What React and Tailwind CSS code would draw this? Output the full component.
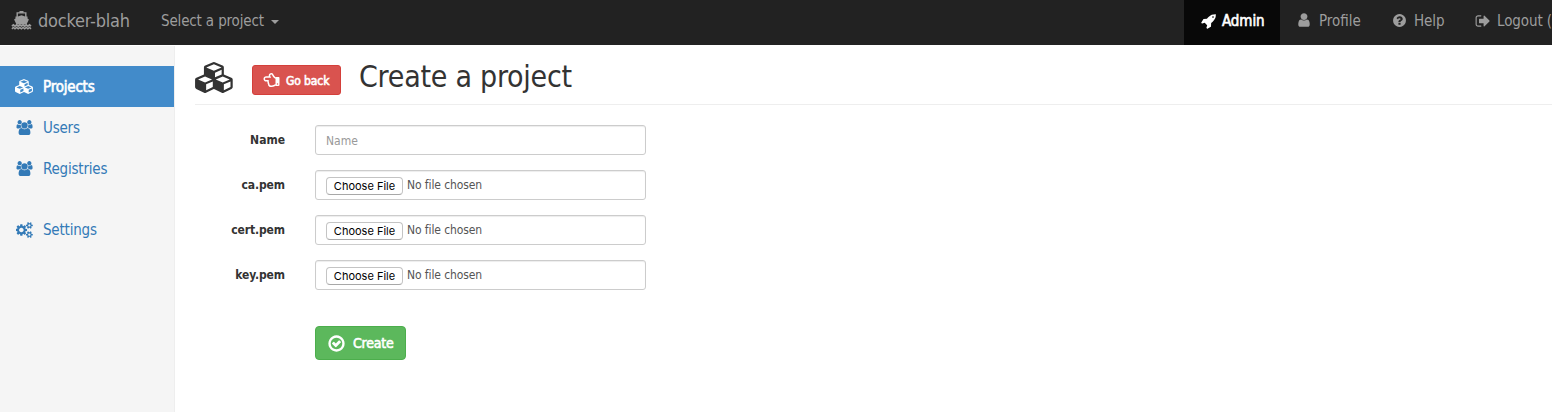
import React from "react";
import { FaRegHandPointLeft } from "react-icons/fa";

const PATHS = {
  cubes:
    "M640 1632l384-192v-314l-384 164v342zm-64-454l404-173-404-173-404 173zm1088 454l384-192v-314l-384 164v342zm-64-454l404-173-404-173-404 173zm-448-293l384-165v-266l-384 164v267zm-64-379l441-189-441-189-441 189zm1088 518v416q0 36-19 67t-52 47l-448 224q-25 14-57 14t-57-14l-448-224q-4-2-7-4-2 2-7 4l-448 224q-25 14-57 14t-57-14l-448-224q-33-16-52-47t-19-67v-416q0-38 21.5-70t56.5-48l434-186v-400q0-38 21.5-70t56.5-48l448-192q23-10 50-10t50 10l448 192q35 16 56.5 48t21.5 70v400l434 186q36 16 57 48t21 70z",
  user: "M1536 1399q0 109-62.5 187t-150.5 78h-854q-88 0-150.5-78t-62.5-187q0-85 8.5-160.5t31.5-152 58.5-131 94-89 134.5-34.5q131 128 313 128t313-128q76 0 134.5 34.5t94 89 58.5 131 31.5 152 8.5 160.5zm-256-887q0 159-112.5 271.5t-271.5 112.5-271.5-112.5-112.5-271.5 112.5-271.5 271.5-112.5 271.5 112.5 112.5 271.5z",
  help: "M1024 1376v-192q0-14-9-23t-23-9h-192q-14 0-23 9t-9 23v192q0 14 9 23t23 9h192q14 0 23-9t9-23zm256-672q0-88-55.5-163t-138.5-116-170-41q-243 0-371 213-15 24 8 42l132 100q7 6 19 6 16 0 25-12 53-68 86-92 34-24 86-24 48 0 85.5 26t37.5 59q0 38-20 61t-68 45q-63 28-115.5 86.5t-52.5 125.5v36q0 14 9 23t23 9h192q14 0 23-9t9-23q0-19 21.5-49.5t54.5-49.5q32-18 49-28.5t46-35 44.5-48 28-60.5 12.5-81zm384 192q0 209-103 385.5t-279.5 279.5-385.5 103-385.5-103-279.5-279.5-103-385.5 103-385.5 279.5-279.5 385.5-103 385.5 103 279.5 279.5 103 385.5z",
  signOut:
    "M704 1440q0 4 1 20t.5 26.5-3 23.5-10 19.5-20.5 6.5h-320q-119 0-203.5-84.5t-84.5-203.5v-704q0-119 84.5-203.5t203.5-84.5h320q13 0 22.5 9.5t9.5 22.5q0 4 1 20t.5 26.5-3 23.5-10 19.5-20.5 6.5h-320q-66 0-113 47t-47 113v704q0 66 47 113t113 47h312l11.5 1 11.5 3 8 5.5 7 9 2 13.5zm928-544q0 26-19 45l-544 544q-19 19-45 19t-45-19-19-45v-288h-448q-26 0-45-19t-19-45v-384q0-26 19-45t45-19h448v-288q0-26 19-45t45-19 45 19l544 544q19 19 19 45z",
  rocket:
    "M1440 448q0-40-28-68t-68-28-68 28-28 68 28 68 68 28 68-28 28-68zm224-288q0 249-75.5 430.5t-253.5 360.5q-81 80-195 176l-20 379q-2 16-16 26l-384 224q-7 4-16 4-12 0-23-9l-64-64q-13-14-8-32l85-276-281-281-276 85q-3 1-9 1-14 0-23-9l-64-64q-17-19-5-39l224-384q10-14 26-16l379-20q96-114 176-195 188-187 358-258t431-71q14 0 24 9.5t10 22.5z",
  check:
    "M1299 813l-422 422q-19 19-45 19t-45-19l-294-294q-19-19-19-45t19-45l102-102q19-19 45-19t45 19l147 147 275-275q19-19 45-19t45 19l102 102q19 19 19 45t-19 45zm141 83q0-148-73-273t-198-198-273-73-273 73-198 198-73 273 73 273 198 198 273 73 273-73 198-198 73-273zm224 0q0 209-103 385.5t-279.5 279.5-385.5 103-385.5-103-279.5-279.5-103-385.5 103-385.5 279.5-279.5 385.5-103 385.5 103 279.5 279.5 103 385.5z",
  users:
    "M529 896q-162 5-265 128h-134q-82 0-138-40.5t-56-118.5q0-353 124-353 6 0 43.5 21t97.5 42.5 119 21.5q67 0 133-23-5 37-5 66 0 159 90 294zm1071 637q0 120-73 189.5t-194 69.5h-874q-121 0-194-69.5t-73-189.5q0-53 3.5-103.5t14-109 26.5-108.5 43-97.5 62-81 85.5-53.5 111.5-20q10 0 43 21.5t73 48 107 48 135 21.5 135-21.5 107-48 73-48 43-21.5q61 0 111.5 20t85.5 53.5 62 81 43 97.5 26.5 108.5 14 109 3.5 103.5zm-1024-1277q0 106-75 181t-181 75-181-75-75-181 75-181 181-75 181 75 75 181zm704 384q0 159-112.5 271.5t-271.5 112.5-271.5-112.5-112.5-271.5 112.5-271.5 271.5-112.5 271.5 112.5 112.5 271.5zm576 225q0 78-56 118.5t-138 40.5h-134q-103-123-265-128 90-135 90-294 0-29-5-66 66 23 133 23 59 0 119-21.5t97.5-42.5 43.5-21q124 0 124 353zm-128-609q0 106-75 181t-181 75-181-75-75-181 75-181 181-75 181 75 75 181z",
  cogs: "M832 896q0-106-75-181t-181-75-181 75-75 181 75 181 181 75 181-75 75-181zm768 512q0-52-38-90t-90-38-90 38-38 90q0 53 37.5 90.5t90.5 37.5 90.5-37.5 37.5-90.5zm0-1024q0-52-38-90t-90-38-90 38-38 90q0 53 37.5 90.5t90.5 37.5 90.5-37.5 37.5-90.5zm-384 421v185q0 10-7 19.5t-16 10.5l-155 24q-11 35-32 76 34 48 90 115 7 11 7 20 0 12-7 19-23 30-82.5 89.5t-78.5 59.5q-11 0-21-7l-115-90q-37 19-77 31-11 108-23 155-7 24-30 24h-186q-11 0-20-7.5t-10-17.5l-23-153q-34-10-75-31l-118 89q-7 7-20 7-11 0-21-8-144-133-144-160 0-9 7-19 10-14 41-53t47-61q-23-44-35-82l-152-24q-10-1-17-9.5t-7-19.5v-185q0-10 7-19.5t16-10.5l155-24q11-35 32-76-34-48-90-115-7-11-7-20 0-12 7-20 22-30 82-89t79-59q11 0 21 7l115 90q34-18 77-32 11-108 23-154 7-24 30-24h186q11 0 20 7.5t10 17.5l23 153q34 10 75 31l118-89q8-7 20-7 11 0 21 8 144 133 144 160 0 8-7 19-12 16-42 54t-45 60q23 48 34 82l152 23q10 2 17 10.5t7 19.5zm640 533v140q0 16-149 31-12 27-30 52 51 113 51 138 0 4-4 7-122 71-124 71-8 0-46-47t-52-68q-20 2-30 2t-30-2q-14 21-52 68t-46 47q-2 0-124-71-4-3-4-7 0-25 51-138-18-25-30-52-149-15-149-31v-140q0-16 149-31 13-29 30-52-51-113-51-138 0-4 4-7 4-2 35-20t59-34 30-16q8 0 46 46.5t52 67.5q20-2 30-2t30 2q51-71 92-112l6-2q4 0 124 70 4 3 4 7 0 25-51 138 17 23 30 52 149 15 149 31zm0-1024v140q0 16-149 31-12 27-30 52 51 113 51 138 0 4-4 7-122 71-124 71-8 0-46-47t-52-68q-20 2-30 2t-30-2q-14 21-52 68t-46 47q-2 0-124-71-4-3-4-7 0-25 51-138-18-25-30-52-149-15-149-31v-140q0-16 149-31 13-29 30-52-51-113-51-138 0-4 4-7 4-2 35-20t59-34 30-16q8 0 46 46.5t52 67.5q20-2 30-2t30 2q51-71 92-112l6-2q4 0 124 70 4 3 4 7 0 25-51 138 17 23 30 52 149 15 149 31z",
};

function Icon({ name, box, className }) {
  return (
    <svg viewBox={box} fill="currentColor" className={"shrink-0 " + className}>
      <path d={PATHS[name]} />
    </svg>
  );
}

function Ship({ className }) {
  return (
    <svg viewBox="0 0 20 19" fill="currentColor" className={className}>
      <path d="M8 0h4v1.200h3v4.200h1v2.200l1.400.800L15 13.500H5L2.600 8.400 4 7.600V5.400h1V1.200h3zM6.400 2.600v2.800L10 4.300l3.600 1.100V2.600z" />
      <path
        d="M.4 15.100l1.500-1.300 1.600 1.300 1.600-1.300 1.600 1.300 1.600-1.300 1.700 1.300 1.600-1.300 1.600 1.300 1.600-1.300 1.600 1.300 1.600-1.300 1.500 1.300M.4 17.800l1.500-1.300 1.600 1.300 1.600-1.300 1.600 1.300 1.600-1.300 1.700 1.300 1.600-1.300 1.600 1.300 1.600-1.300 1.600 1.300 1.600-1.300 1.500 1.300"
        fill="none"
        stroke="currentColor"
        strokeWidth="1.600"
      />
    </svg>
  );
}

function FileRow({ label }) {
  return (
    <div className="mb-[15px] flex h-[30px]">
      <label className="w-[90px] pt-[7px] text-right text-[12px] leading-[17px] font-bold tracking-[-0.1px]">{label}</label>
      <div className="ml-[30px] flex w-[331px] rounded-[3px] border border-[#ccc] pl-[10px] shadow-[inset_0_1px_1px_rgba(0,0,0,0.075)]">
        <button className="mt-[6px] h-[18px] w-[77px] shrink-0 rounded-[4px] border border-[#c4c4c4] border-b-[#a8a8a8] bg-white font-['Inter',sans-serif] text-[11px] leading-[16px] whitespace-nowrap text-black">
          Choose File
        </button>
        <span className="ml-[4px] pt-[6px] text-[12px] leading-[16px] tracking-[-0.1px] text-[#555]">No file chosen</span>
      </div>
    </div>
  );
}

export default function App() {
  return (
    <div className="h-[412px] w-[1552px] overflow-hidden bg-white font-['DejaVu_Sans_Condensed','DejaVu_Sans',sans-serif] text-[#333] [font-stretch:condensed]">
      <nav className="flex h-[45px] items-start bg-[#222] text-[15px] leading-[20px] text-[#9d9d9d]">
        <Ship className="mt-[11px] ml-[11px] h-[19px] w-[21px]" />
        <span className="mt-[11px] ml-[6px] w-[93px] text-[18px] tracking-[-0.2px] whitespace-nowrap">docker-blah</span>
        <span className="mt-[11px] ml-[30px] w-[104px] tracking-[-0.15px] whitespace-nowrap">Select a project</span>
        <span className="mt-[20px] ml-[6px] border-x-4 border-t-4 border-x-transparent border-t-[#9d9d9d]" />
        <div className="ml-auto flex h-[45px] w-[96px] shrink-0 bg-[#080808] pt-[11px] pl-[17px] text-white">
          <Icon name="rocket" box="0 0 1792 1792" className="mt-[2px] h-[16px] w-[16px]" />
          <span className="ml-[5px] tracking-[-0.1px] [-webkit-text-stroke:0.6px_white]">Admin</span>
        </div>
        <div className="flex w-[272px] shrink-0 pt-[11px] whitespace-nowrap">
          <div className="flex w-[95px] pl-[16px]">
            <Icon name="user" box="0 0 1792 1792" className="mt-[1px] h-[16px] w-[16px]" />
            <span className="ml-[7px]">Profile</span>
          </div>
          <div className="flex w-[84px] pl-[17px]">
            <Icon name="help" box="0 0 1792 1792" className="mt-[2px] h-[15px] w-[15px]" />
            <span className="ml-[7px] tracking-[-0.1px]">Help</span>
          </div>
          <div className="flex pl-[16px]">
            <Icon name="signOut" box="0 0 1792 1792" className="mt-[2px] h-[16px] w-[16px]" />
            <span className="ml-[6px] tracking-[-0.1px]">Logout (</span>
          </div>
        </div>
      </nav>
      <div className="flex h-[367px]">
        <aside className="mt-px w-[175px] shrink-0 border-r border-[#eee] bg-[#f5f5f5] pt-[20px] text-[15px] leading-[20px] tracking-[-0.2px] text-[#337ab7]">
          <div className="flex h-[41px] items-center bg-[#428bca] pl-[15px] text-white">
            <Icon name="cubes" box="0 0 2304 1792" className="h-[15px] w-[19px]" />
            <span className="ml-[9px] tracking-[-0.2px] [-webkit-text-stroke:0.6px_white]">Projects</span>
          </div>
          <div className="flex h-[41px] items-center pl-[16px]">
            <Icon name="users" box="-64 0 1920 1792" className="h-[15px] w-[17px]" />
            <span className="ml-[10px]">Users</span>
          </div>
          <div className="flex h-[41px] items-center pl-[16px]">
            <Icon name="users" box="-64 0 1920 1792" className="h-[15px] w-[17px]" />
            <span className="ml-[10px]">Registries</span>
          </div>
          <div className="mt-[20px] flex h-[41px] items-center pl-[16px]">
            <Icon name="cogs" box="0 0 1856 1792" className="h-[16px] w-[17px]" />
            <span className="ml-[10px]">Settings</span>
          </div>
        </aside>
        <main className="min-w-0 flex-1 pl-[20px]">
          <div className="flex h-[60px] border-b border-[#eee]">
            <Icon name="cubes" box="0 0 2304 1792" className="mt-[17px] h-[31px] w-[40px]" />
            <button className="mt-[20px] ml-[17px] flex h-[30px] w-[89px] items-center rounded-[3px] border border-[#d43f3a] bg-[#d9534f] pl-[10px] text-[12px] tracking-[-0.1px] whitespace-nowrap text-white">
              <FaRegHandPointLeft className="h-[16px] w-[17px] shrink-0" />
              <span className="mt-px ml-[6px] [-webkit-text-stroke:0.6px_white]">Go back</span>
            </button>
            <h1 className="mt-[14px] ml-[18px] text-[30px] leading-[36px] tracking-[-0.25px] whitespace-nowrap">Create a project</h1>
          </div>
          <form className="pt-[20px]">
            <div className="mb-[15px] flex h-[30px]">
              <label className="w-[90px] pt-[7px] text-right text-[12px] leading-[17px] font-bold">Name</label>
              <input
                placeholder="Name"
                className="ml-[30px] w-[331px] rounded-[3px] border border-[#ccc] px-[10px] pt-[2px] text-[12px] shadow-[inset_0_1px_1px_rgba(0,0,0,0.075)] placeholder:text-[#999]"
              />
            </div>
            <FileRow label="ca.pem" />
            <FileRow label="cert.pem" />
            <FileRow label="key.pem" />
            <button className="mt-[36px] ml-[120px] flex h-[34px] w-[91px] items-center rounded-[4px] border border-[#4cae4c] bg-[#5cb85c] pl-[11px] text-[14px] tracking-[-0.2px] text-white">
              <Icon name="check" box="0 0 1792 1792" className="h-[19px] w-[19px]" />
              <span className="ml-[7px] [-webkit-text-stroke:0.6px_white]">Create</span>
            </button>
          </form>
        </main>
      </div>
    </div>
  );
}
